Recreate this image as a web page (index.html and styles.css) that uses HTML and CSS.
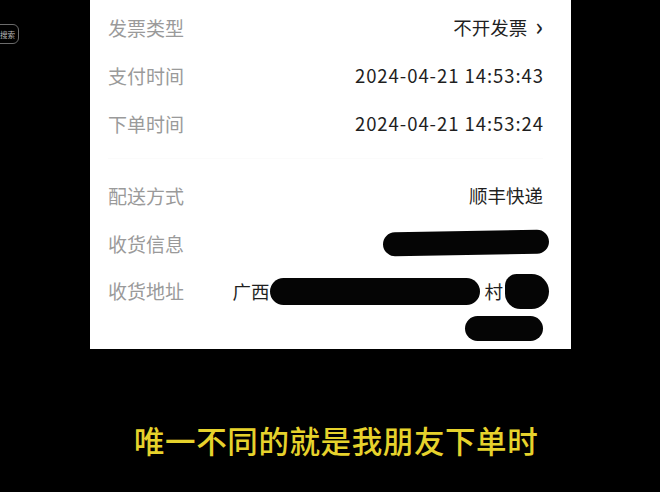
FILE: index.html
```html
<!DOCTYPE html>
<html lang="zh-CN">
<head>
<meta charset="utf-8">
<link rel="stylesheet" href="styles.css">
</head>
<body>
<div class="screen">
  <div class="chip">搜索</div>
  <div class="card">
    <div class="group">
      <div class="row"><span class="label">发票类型</span><span class="value">不开发票<span class="chev">›</span></span></div>
      <div class="row"><span class="label">支付时间</span><span class="value date">2024-04-21 14:53:43</span></div>
      <div class="row"><span class="label">下单时间</span><span class="value date">2024-04-21 14:53:24</span></div>
    </div>
    <div class="divider"></div>
    <div class="group">
      <div class="row"><span class="label">配送方式</span><span class="value">顺丰快递</span></div>
      <div class="row"><span class="label">收货信息</span><span class="value"><span class="blob b-info"></span></span></div>
      <div class="row addr">
        <span class="label">收货地址</span>
        <div class="addr-value">
          <div class="addr-line">广西<span class="blob b-a1"></span>村<span class="blob b-a2"></span></div>
          <div class="addr-line2"><span class="blob b-a3"></span></div>
        </div>
      </div>
    </div>
  </div>
  <div class="caption">唯一不同的就是我朋友下单时</div>
</div>
</body>
</html>
```

FILE: styles.css
```css
html, body {
  margin: 0;
  padding: 0;
  background: #000;
}
body {
  font-family: "Noto Sans CJK SC", "Noto Sans", sans-serif;
}
.screen {
  position: relative;
  width: 660px;
  height: 492px;
  overflow: hidden;
  background: #000;
}
.chip {
  position: absolute;
  left: -10px;
  top: 24px;
  width: 29px;
  height: 20px;
  border: 1px solid #6b6b6b;
  border-radius: 6px;
  color: #b8b8b8;
  font-size: 7.5px;
  line-height: 19px;
  text-align: right;
  padding-right: 3px;
  box-sizing: border-box;
}
.card {
  margin-left: 90px;
  width: 481px;
  height: 349px;
  background: #fff;
  padding: 3px 28px 0 18px;
  box-sizing: border-box;
}
.row {
  display: flex;
  justify-content: space-between;
  align-items: center;
  height: 48px;
}
.label {
  color: #9a9a9a;
  font-size: 19px;
}
.value {
  color: #1f1f1f;
  font-size: 18.5px;
  display: flex;
  align-items: center;
}
.value.date {
  letter-spacing: 0.95px;
  margin-right: -1px;
}
.chev {
  font-size: 25px;
  font-weight: 500;
  margin-left: 8px;
  margin-right: 0;
  line-height: 1;
  position: relative;
  top: -2px;
}
.divider {
  height: 1px;
  margin: 11px 0 12px;
  background: #fbfbfb;
}
.blob {
  display: inline-block;
  background: #050505;
  border-radius: 14px;
}
.b-info {
  width: 166px;
  height: 24px;
  margin-right: -6px;
  transform: rotate(-1deg);
}
.row.addr {
  height: auto;
  align-items: flex-start;
}
.row.addr .label {
  line-height: 48px;
}
.addr-value {
  display: flex;
  flex-direction: column;
  align-items: flex-end;
}
.addr-line {
  height: 48px;
  display: flex;
  align-items: center;
  color: #1f1f1f;
  font-size: 18.5px;
  margin-right: -6px;
}
.b-a1 {
  width: 210px;
  height: 27px;
  margin-left: 1px;
  margin-right: 4px;
}
.b-a2 {
  width: 44px;
  height: 35px;
  border-radius: 12px 18px 18px 16px;
  margin-left: 2px;
}
.addr-line2 {
  height: 30px;
  display: flex;
  align-items: flex-start;
}
.b-a3 {
  width: 78px;
  height: 25px;
  margin-top: 1px;
}
.caption {
  margin-top: 71px;
  padding-left: 134px;
  color: #e6d22c;
  font-size: 30.5px;
  font-weight: 500;
  letter-spacing: 0.6px;
  line-height: 40px;
}
```
